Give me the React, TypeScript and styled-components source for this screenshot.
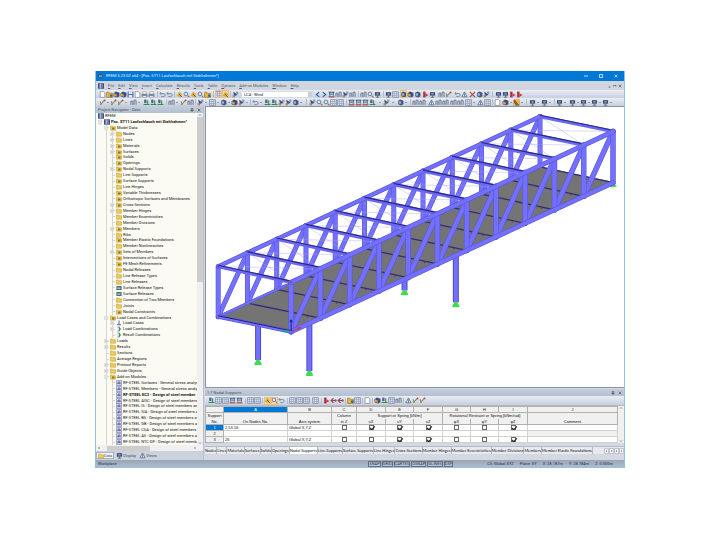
import React from "react";
import styled, { createGlobalStyle, css } from "styled-components";

const GlobalStyle = createGlobalStyle`
  * { box-sizing: border-box; }
  body { margin: 0; background: #fff; font-family: Roboto, "Noto Sans", sans-serif; font-size: 4px; line-height: 6px; color: #111; }
  button, input, select, table { font: inherit; color: inherit; }
  button { padding: 0; border: 0; background: none; }
`;

const Page = styled.div`
  height: 100vh;
  min-height: 400px;
  padding: 71px 95px 72px;
  display: flex;
`;
const Window = styled.div`
  flex: 1;
  min-width: 0;
  display: flex;
  flex-direction: column;
  border: solid #8fc0ea;
  border-width: 0 1px 1px;
  background: #d3d8e1;
`;
const TitleBar = styled.header`
  flex: 0 0 10px;
  display: flex;
  align-items: center;
  gap: 3px;
  padding: 0 2px;
  background: #0078d7;
  color: #e8f3fd;
`;
const Title = styled.h1`
  flex: 1;
  margin: 0;
  font-size: 4px;
  font-weight: 400;
  white-space: nowrap;
`;
const WindowButton = styled.button`
  width: 12px;
  height: 10px;
  display: flex;
  align-items: center;
  justify-content: center;
`;
const MenuBar = styled.nav`
  flex: 0 0 9px;
  display: flex;
  align-items: center;
  gap: 4px;
  padding: 0 2px;
  background: #d1d5df;
  color: #555b68;
`;
const MenuItem = styled.button`
  white-space: nowrap;
`;
const ChildControls = styled.div`
  margin-left: auto;
  display: flex;
  gap: 1px;
`;
const ToolBar = styled.div<{ $height: number }>`
  flex: 0 0 ${(p) => p.$height}px;
  display: flex;
  align-items: center;
  padding-left: 3px;
  overflow: hidden;
  background: linear-gradient(#e9edf4, #d5dbe6 60%, #c7cfdd);
`;
const ToolButton = styled.button<{ $active?: boolean }>`
  flex: 0 0 7px;
  height: 8px;
  display: flex;
  align-items: center;
  justify-content: center;
  ${(p) => p.$active && css`
    background: #fbd9a0;
    outline: 1px solid #e2c086;
    outline-offset: -1px;
  `}
`;
const Drop = styled.i`
  flex: 0 0 4px;
  display: flex;
  justify-content: center;
  &::after { content: ""; border: 1px solid transparent; border-top-color: #555; margin-top: 1px; }
`;
const Split = styled.i<{ $size: number }>`
  flex: 0 0 ${(p) => p.$size}px;
  height: 6px;
  background: ${(p) => (p.$size > 2 ? "linear-gradient(#b4bccb, #b4bccb) center / 1px 100% no-repeat" : "none")};
`;
const LoadSelect = styled.select`
  flex: 0 0 72px;
  height: 7px;
  padding: 0 2px;
  appearance: none;
  border: 1px solid #d5dae3;
  border-radius: 0;
  background: linear-gradient(#c9cfda, #c9cfda) right / 4px 100% no-repeat #fff;
  line-height: 5px;
`;
const Workspace = styled.div`
  flex: 1;
  min-height: 0;
  display: flex;
  gap: 1px;
`;
const Navigator = styled.aside`
  flex: 0 0 108px;
  min-width: 0;
  overflow: hidden;
  display: flex;
  flex-direction: column;
  border-right: 1px solid #b7bfcc;
`;
const PanelTitle = styled.div`
  flex: 0 0 7px;
  display: flex;
  align-items: center;
  justify-content: space-between;
  padding: 0 2px;
  background: linear-gradient(#c4cddb, #b4bfcf);
  color: #4b5361;
`;
const TitleIcons = styled.span`
  display: flex;
  gap: 3px;
`;
const TreeArea = styled.div`
  flex: 1;
  min-height: 0;
  display: flex;
  background: #fbfaf3;
`;
const Tree = styled.ul`
  flex: 1;
  min-width: 0;
  margin: 0;
  padding: 0 0 0 1px;
  overflow: hidden;
  list-style: none;
  display: grid;
  grid-auto-rows: 1fr;
`;
const TreeRow = styled.li<{ $bold?: boolean }>`
  min-height: 0;
  display: flex;
  align-items: center;
  white-space: nowrap;
  font-weight: ${(p) => (p.$bold ? 700 : 400)};
`;
const Guide = styled.span<{ $line: boolean }>`
  flex: 0 0 6px;
  align-self: stretch;
  background: ${(p) => (p.$line ? "linear-gradient(#d6d6d0, #d6d6d0) 3px 0 / 1px 100% no-repeat" : "none")};
`;
const Branch = styled(Guide)`
  display: flex;
  align-items: center;
  background: linear-gradient(#d6d6d0, #d6d6d0) 3px 0 / 1px 100% no-repeat, linear-gradient(#d6d6d0, #d6d6d0) 3px 50% / 3px 1px no-repeat;
`;
const Expander = styled.button`
  width: 4px;
  height: 4px;
  margin-left: 1px;
  display: flex;
`;
const NodeIcon = styled.span`
  flex: 0 0 7px;
  margin-right: 1px;
  display: flex;
  justify-content: center;
`;
const ScrollTrack = styled.div`
  flex: 0 0 6px;
  display: flex;
  flex-direction: column;
  align-items: center;
  background: #f0f0f0;
`;
const Thumb = styled.div<{ $grow: number }>`
  flex: ${(p) => p.$grow} 1 0;
  width: 100%;
  background: #cdcdcd;
`;
const Space = styled.div<{ $grow: number }>`
  flex: ${(p) => p.$grow} 1 0;
`;
const HScroll = styled.div`
  flex: 0 0 6px;
  display: flex;
  align-items: center;
  padding: 0 6px 0 1px;
  background: #f0f0f0;
`;
const HThumb = styled.div`
  flex: 0 0 43%;
  height: 5px;
  margin: 0 auto 0 6px;
  background: #cdcdcd;
`;
const NavTabs = styled.div`
  flex: 0 0 9px;
  display: flex;
  align-items: center;
  gap: 1px;
  background: #cbd2de;
  color: #475062;
`;
const NavTab = styled.button<{ $active?: boolean }>`
  height: 7px;
  padding: 0 1px;
  display: flex;
  align-items: center;
  background: ${(p) => (p.$active ? "#f4f6fa" : "transparent")};
  border: ${(p) => (p.$active ? "1px solid #a9b2c2" : "0")};
`;
const Content = styled.main`
  flex: 1;
  min-width: 0;
  display: flex;
  flex-direction: column;
`;
const Viewport = styled.div`
  flex: 1;
  min-height: 0;
  display: flex;
  border: solid #8a93a0;
  border-width: 1px 0 1px 1px;
  background: #fff;
  svg { width: 100%; height: 100%; display: block; }
`;
const TablePanel = styled.section`
  flex: 0 0 71px;
  margin-top: 1px;
  display: flex;
  flex-direction: column;
`;
const Grid = styled.div`
  display: flex;
  border-top: 1px solid #b4b9c2;
  background: #fff;
`;
const SheetTable = styled.table`
  flex: 1;
  min-width: 0;
  table-layout: fixed;
  border-collapse: collapse;
  background: #fff;
  font-family: "Liberation Sans", Arial, sans-serif;
  line-height: 5px;
`;
const HeadCell = styled.th<{ $active?: boolean; $top?: boolean; $bottom?: boolean }>`
  height: 6px;
  padding: 0;
  overflow: hidden;
  white-space: nowrap;
  font-weight: 400;
  text-align: center;
  background: ${(p) => (p.$active ? "#0078d7" : "#f0f0f0")};
  color: ${(p) => (p.$active ? "#fff" : "inherit")};
  border: 1px solid #b0b0b0;
  ${(p) => p.$top && "border-bottom: 0;"}
  ${(p) => p.$bottom && "border-top: 0;"}
`;
const Cell = styled.td<{ $center?: boolean; $focus?: boolean; $muted?: boolean }>`
  height: 6px;
  padding: 0 1px;
  overflow: hidden;
  white-space: nowrap;
  text-align: ${(p) => (p.$center ? "center" : "left")};
  background: ${(p) => (p.$muted ? "#f0f0f0" : "#fff")};
  border: 1px solid #d0d0d0;
  ${(p) => p.$focus && "border: 1px dashed #777;"}
`;
const Check = styled.input`
  appearance: none;
  width: 5px;
  height: 5px;
  margin: 0 auto;
  display: block;
  border: 1px solid #666;
  background: #fff;
  &:checked::before {
    content: "";
    display: block;
    width: 4px;
    height: 2px;
    border: solid #222;
    border-width: 0 0 1px 1px;
    transform: rotate(-45deg);
  }
`;
const SheetTabs = styled.div`
  flex: 0 0 8px;
  margin-top: 3px;
  display: flex;
  align-items: center;
  overflow: hidden;
  background: #e7e9ee;
  border-top: 1px solid #b6bac2;
  font-family: Lato, sans-serif;
`;
const SheetTab = styled.button<{ $active?: boolean }>`
  height: 7px;
  flex: none;
  white-space: nowrap;
  border-right: 1px solid #b4b8c0;
  background: ${(p) => (p.$active ? "#fff" : "transparent")};
`;
const TabArrows = styled.div`
  margin-left: auto;
  flex: none;
  display: flex;
`;
const ArrowButton = styled.button`
  width: 5px;
  height: 6px;
  border: 1px solid #c0c5ce;
  background: #f0f2f5;
  display: flex;
  align-items: center;
  justify-content: center;
`;
const StatusBar = styled.footer`
  flex: 0 0 7px;
  display: flex;
  align-items: center;
  padding: 0 2px;
  background: linear-gradient(#98a5b7, #b0bccb);
  color: #29303b;
  white-space: nowrap;
`;
const StatusLabel = styled.span`
  flex: 1 1 0;
`;
const StatusToggle = styled.button`
  height: 6px;
  margin-right: 1px;
  line-height: 4px;
  border: 1px solid #667182;
  background: #bbc4d1;
`;
const Coordinates = styled.span`
  margin-left: 33px;
  padding-right: 9px;
  display: flex;
  gap: 6px;
`;

const glyphs = {
  page: <path d="M1 .5h3l1 1v4H1z" fill="#fff" stroke="#7b8593" strokeWidth=".6" />,
  open: <><path d="M.5 1h2l.5 1h2.500v3.500h-5z" fill="#e6b437" stroke="#957327" strokeWidth=".5" /><path d="M3.500 3h2v2h-2z" fill="#3d5d9c" /></>,
  box: <><path d="M.5 2l2-1.500 3 1v3l-2 1-3-1z" fill="#3c4c80" /><path d="M.8 2l2.500 1v2L.8 4z" fill="#df9c36" /></>,
  save: <><path d="M.5.500h5v5h-5z" fill="#5670b4" /><path d="M1.500.500h3v2h-3zM1.500 3.500h3v2h-3z" fill="#e5ebf6" /></>,
  print: <><path d="M.5 2.500h5v2.500h-5z" fill="#7d8899" /><path d="M1.500.500h3v2h-3zM1.500 4h3v1.500h-3z" fill="#fff" stroke="#697382" strokeWidth=".4" /></>,
  find: <><circle cx="2.500" cy="2.500" r="1.600" fill="#d8e5f5" stroke="#5d6b88" strokeWidth=".7" /><path d="M4 4l1.500 1.500" stroke="#ae6b32" strokeWidth=".9" /></>,
  undo: <path d="M1.500 1L.7 2.300l1.500.7M1 2.200h3.200q1.300.2 1 1.600-.3 1-1.600 1H2" fill="none" stroke="#74839e" strokeWidth=".8" />,
  gold: <><path d="M.6 4l2-3.500 2.700 2-1.500 3z" fill="#deb03a" /><path d="M2.500 2.500l2.600 2.700" stroke="#785224" strokeWidth=".8" /></>,
  red: <><path d="M1 .5h2v5H1z" fill="#a93240" /><path d="M3 2l2.500 1.500L3 5z" fill="#d93434" /></>,
  back: <><path d="M5.500 3h-4M3 1L1 3l2 2" stroke="#ad3a45" fill="none" /><path d="M4 2h1.500v2H4z" fill="#59698c" /></>,
  grid: <><path d="M.5.500h5v5h-5z" fill="#dfe6f1" stroke="#7383a5" strokeWidth=".6" /><path d="M.5 2.200h5M.5 3.900h5M2.200.500v5M3.900.500v5" stroke="#8f9bb4" strokeWidth=".5" /></>,
  left: <path d="M4.500 1L2 3l2.500 2" stroke="#3059a6" fill="none" />,
  right: <path d="M1.500 1L4 3 1.500 5" stroke="#3059a6" fill="none" />,
  load: <><path d="M.5 1h5M1.500 1v3M4.500 1v3" stroke="#384f83" strokeWidth=".8" /><path d="M.5 5h5" stroke="#a54142" /><path d="M2 2h2v1.500H2z" fill="#6f9f79" /></>,
  cursor: <><path d="M1 .5l4 3-2 .3-1 1.700z" fill="#3a5285" /><path d="M3.500.500h2v2h-2z" fill="#8c99b4" /><path d="M.5 3.500h1.800v2H.5z" fill="#b98d53" /></>,
  solid: <><path d="M1 1.500L3 .5l2.500 1v3l-2 1L1 4.500z" fill="#46557c" /><path d="M1.500 2h2v2h-2z" fill="#9bb6dc" /></>,
  green: <><path d="M1 .5h2v3H1z" fill="#526289" /><path d="M.5 4.700h5M4 1v4" stroke="#2b9145" strokeWidth=".9" /></>,
  cross: <path d="M.8.800l4.400 4.400M5.200.800L.8 5.200" stroke="#b44b45" />,
  pencil: <><path d="M1 5l3.800-4M1 2l1 3" stroke="#898b53" strokeWidth=".9" /><circle cx="4.800" cy="1.200" r=".8" fill="#b5434a" /></>,
  view: <><path d="M.8 1h4.400v3H.8z" fill="#3e4c72" /><path d="M2 2h2v1H2z" fill="#95b5de" /><path d="M3 4v1.500M1.500 5.300h3" stroke="#5b6477" strokeWidth=".7" /></>,
  pair: <><path d="M.8 5V1.800h1.600V5M3.500 5V1h1.700v4" fill="none" stroke="#66738c" strokeWidth=".8" /></>,
  tri: <path d="M3 .8L.8 5h4.400zM3 2v3" fill="#edf1f6" stroke="#59698c" strokeWidth=".7" />,
  color: <><path d="M.5.500h5v5h-5z" fill="#ca3e36" /><path d="M.5 3l2.500 2.500H.5zM5.500.500v5l-4-5z" fill="#ebc433" /><path d="M2 2l3.500 3.500H2z" fill="#358c4b" /></>,
};
type Kind = keyof typeof glyphs;
const codes: Record<string, Kind> = {
  a: "page", b: "open", c: "box", d: "save", e: "print", f: "find", g: "undo", h: "gold", i: "red", j: "grid", k: "back",
  l: "left", r: "right", m: "load", n: "cursor", s: "solid", t: "green", x: "cross", p: "pencil", v: "view",
  q: "pair", w: "tri", y: "color",
};
const Icon = ({ kind }: { kind: Kind }) => (
  <svg width="7" height="7" viewBox="0 0 6 6" aria-hidden="true">{glyphs[kind]}</svg>
);

/* Letters are tools, "*" marks the next one active, "." is a drop arrow, digits are gaps of that width. */
const Tools = ({ layout }: { layout: string }) => {
  const parts: React.ReactNode[] = [];
  let active = false;
  [...layout].forEach((ch, index) => {
    if (ch === "*") active = true;
    else if (ch === ".") parts.push(<Drop key={index} />);
    else if (/\d/.test(ch)) parts.push(<Split key={index} $size={Number(ch)} />);
    else {
      parts.push(
        <ToolButton key={index} type="button" $active={active} aria-label={codes[ch]}>
          <Icon kind={codes[ch]} />
        </ToolButton>
      );
      active = false;
    }
  });
  return <>{parts}</>;
};

const Arrow = ({ d, color = "#555" }: { d: string; color?: string }) => (
  <svg width="4" height="4" viewBox="0 0 4 4" aria-hidden="true">
    <path d={d} fill="none" stroke={color} strokeWidth=".7" />
  </svg>
);
const UP = "M1 2.500l1-1 1 1";
const DOWN = "M1 1.500l1 1 1-1";
const LEFT = "M2.500 1l-1 1 1 1";
const RIGHT = "M1.500 1l1 1-1 1";
const CROSS = "M.7.700l2.600 2.600M3.300.700L.7 3.300";
const PIN = "M1.300.500h1.500v2H1.300zM.5 2.500h3M2 2.500v1.500";

type TreeIcon = "app" | "folder" | "mark" | "surface" | "load" | "combo" | "module";
const TreeGlyph = ({ kind }: { kind: TreeIcon }) => (
  <svg width="6" height="6" viewBox="0 0 6 6" aria-hidden="true">
    {kind === "app" && <><path d="M0 .3h6v5.400H0z" fill="#3d5285" /><path d="M1 2h4M1 4h4M2.500.500v5" stroke="#dce5f5" strokeWidth=".6" /></>}
    {(kind === "folder" || kind === "mark") && <path d="M.4 1h2l.6.800h2.600v3.400H.4z" fill="#f0cd55" stroke="#b99434" strokeWidth=".5" />}
    {kind === "mark" && <path d="M2 2.500h2.500v2H2z" fill="#8d7726" />}
    {kind === "surface" && <><path d="M.4 1h5.200v4H.4z" fill="#4d6d89" /><path d="M1.200 2.500h3.600L4 4H1.500z" fill="#a6ce91" /></>}
    {kind === "load" && <path d="M3 .5v4M1 4.700h4" stroke="#385a9d" strokeWidth=".9" />}
    {kind === "combo" && <><path d="M1.500 1h2v4h-2" fill="#d8e2f1" stroke="#4f6394" strokeWidth=".7" /><path d="M3 1.500L5.500 3 3 4.500z" fill="#329545" /></>}
    {kind === "module" && <><path d="M.5.500h5v5h-5z" fill="#dfe2f6" stroke="#7075af" strokeWidth=".6" /><path d="M2 4.500V2h2v2.500M1.500 3.300h3" fill="none" stroke="#34396e" strokeWidth=".6" /></>}
  </svg>
);

type Row = [level: number, label: string, icon: TreeIcon, mark?: "+" | "-", bold?: boolean];
const rows: Row[] = [
  [0, "RFEM", "app"],
  [1, "Pos. ST11 Laufschlauch mit Stahlrahmen*", "app", "-", true],
  [2, "Model Data", "mark", "-"],
  [3, "Nodes", "folder", "+"], [3, "Lines", "folder", "+"], [3, "Materials", "mark", "+"], [3, "Surfaces", "mark", "+"],
  [3, "Solids", "mark"], [3, "Openings", "mark"], [3, "Nodal Supports", "mark", "+"], [3, "Line Supports", "folder"],
  [3, "Surface Supports", "mark"], [3, "Line Hinges", "folder"], [3, "Variable Thicknesses", "mark"],
  [3, "Orthotropic Surfaces and Membranes", "mark"], [3, "Cross-Sections", "mark", "+"], [3, "Member Hinges", "folder", "+"],
  [3, "Member Eccentricities", "folder"], [3, "Member Divisions", "folder"], [3, "Members", "mark", "+"], [3, "Ribs", "folder"],
  [3, "Member Elastic Foundations", "mark"], [3, "Member Nonlinearities", "folder"], [3, "Sets of Members", "mark", "+"],
  [3, "Intersections of Surfaces", "mark"], [3, "FE Mesh Refinements", "mark"], [3, "Nodal Releases", "folder"],
  [3, "Line Release Types", "folder"], [3, "Line Releases", "folder"], [3, "Surface Release Types", "surface"],
  [3, "Surface Releases", "surface"], [3, "Connection of Two Members", "folder"], [3, "Joints", "folder"],
  [3, "Nodal Constraints", "mark"],
  [2, "Load Cases and Combinations", "mark", "-"],
  [3, "Load Cases", "load", "+"], [3, "Load Combinations", "combo", "+"], [3, "Result Combinations", "combo"],
  [2, "Loads", "folder", "+"], [2, "Results", "folder", "+"], [2, "Sections", "folder"], [2, "Average Regions", "folder"],
  [2, "Printout Reports", "folder", "+"], [2, "Guide Objects", "folder", "+"], [2, "Add-on Modules", "mark", "-"],
  [3, "RF-STEEL Surfaces - General stress analys", "module"], [3, "RF-STEEL Members - General stress analy", "module"],
  [3, "RF-STEEL EC3 - Design of steel member", "module", undefined, true],
  [3, "RF-STEEL AISC - Design of steel members", "module"], [3, "RF-STEEL IS - Design of steel members ac", "module"],
  [3, "RF-STEEL SIA - Design of steel members a", "module"], [3, "RF-STEEL BS - Design of steel members a", "module"],
  [3, "RF-STEEL GB - Design of steel members a", "module"], [3, "RF-STEEL CSA - Design of steel members", "module"],
  [3, "RF-STEEL AS - Design of steel members a", "module"], [3, "RF-STEEL NTC-DF - Design of steel memb", "module"],
];

/* Bridge geometry: eleven panels, far and near truss planes. */
const PANELS = 11;
const nodes = Array.from({ length: PANELS + 1 }, (_, i) => i / PANELS);
const farTop = (t: number) => [217.5 + 323 * t, 267 - 150.5 * t];
const farLow = (t: number) => [217.5 + 323 * t, 317.5 - 150.5 * t];
const nearTop = (t: number) => [290.7 + 323 * t, 283 - 151.5 * t];
const nearLow = (t: number) => [290.7 + 323 * t, 332.5 - 149.5 * t];
const seg = (a: number[], b: number[]) => `M${a[0]} ${a[1]}L${b[0]} ${b[1]}`;

const Beam = ({ d, w }: { d: string; w: number }) => (
  <>
    <path d={d} stroke="#5956de" strokeWidth={w} strokeLinecap="round" fill="none" />
    <path d={d} stroke="#7270fc" strokeWidth={w - 1.2} strokeLinecap="round" fill="none" />
  </>
);
const CrossBeam = ({ a, b }: { a: number[]; b: number[] }) => (
  <>
    <path d={seg(a, b)} stroke="#6967f4" strokeWidth="3.500" />
    <path d={seg([a[0], a[1] - 1.2], [b[0], b[1] - 1.2])} stroke="#2b2880" strokeWidth="1.200" />
  </>
);
const Column = ({ x, top, foot }: { x: number; top: number; foot: number }) => (
  <>
    <path d={`M${x} ${top}V${foot}`} stroke="#4b48cb" strokeWidth="6" />
    <path d={`M${x} ${top}V${foot}`} stroke="#7270fc" strokeWidth="4" />
    <path d={`M${x - 1.5} ${foot}h3l2 3.500q1 1.500-1 1.500h-5q-2 0-1-1.500z`} fill="#3fdc4c" />
  </>
);

const Bridge = () => (
  <svg viewBox="206 107 418 281" role="img" aria-label="Bridge model">
    <Column x={404.5} top={275} foot={291} />
    {nodes.slice(0, -1).map((t) => (
      <Beam key={t} d={seg(farLow(t), farTop(t + 1 / PANELS))} w={5} />
    ))}
    {nodes.map((t) => <Beam key={t} d={seg(farLow(t), farTop(t))} w={5} />)}
    <path d="M217.500 316.500L540 166.500 613.700 182 291 331.500z" fill="#747474" />
    {nodes.slice(1).map((t) => (
      <path key={t} d={seg(farLow(t), nearLow(t))} stroke="#302e7c" strokeWidth="1.300" />
    ))}
    {nodes.slice(1, -1).map((t) => {
      const [x, y] = nearLow(t);
      return <circle key={t} cx={x - 13} cy={y - 1.5} r=".7" fill="#6e2d60" />;
    })}
    <Beam d={seg(farLow(0), farLow(0.21))} w={3} />
    {nodes.slice(0, -1).map((t) => {
      const n = t + 1 / PANELS;
      return <path key={t} d={seg(farTop(n), nearTop(t)) + seg(farTop(t), nearTop(n))} stroke="#a3a2e4" strokeWidth=".4" />;
    })}
    <Beam d={seg(farTop(0), farTop(1))} w={4.5} />
    {nodes.map((t) => <CrossBeam key={t} a={farTop(t)} b={nearTop(t)} />)}
    <Column x={257.5} top={325} foot={361} />
    <Column x={309} top={324} foot={372} />
    <Column x={456} top={255} foot={303} />
    <path d="M609 187l5-3 4 2.500q-3 2-9 .5z" fill="#3fdc4c" />
    {nodes.slice(0, -1).map((t) => (
      <Beam key={t} d={seg(nearLow(t), nearTop(t + 1 / PANELS))} w={5.5} />
    ))}
    {nodes.map((t) => <Beam key={t} d={seg(nearLow(t), nearTop(t))} w={5.5} />)}
    <Beam d={seg(nearTop(0), nearTop(1))} w={5} />
    <Beam d={seg(nearLow(0), nearLow(1))} w={5} />
    <Beam d={seg(farLow(0), nearLow(0))} w={4} />
    <path d="M217.500 316.500L290 331.500" stroke="#23206f" strokeWidth="1" />
    <path d="M290.700 332v-11m-1.200 2l1.200-2.500 1.200 2.500" stroke="#171795" strokeWidth="1" fill="none" />
    <path d="M281 331.500l9 1" stroke="#2c9d99" strokeWidth="2" />
    <path d="M292 332l8-3.500m-3 0l3 0-2 2" stroke="#d72c52" strokeWidth="1" fill="none" />
    <circle cx="290.700" cy="283" r=".8" fill="#7d2950" />
    <circle cx="217.500" cy="267.500" r=".8" fill="#7d2950" />
  </svg>
);

const letters = "ABCDEFGHIJ".split("");
const widths = [18, 64, 44, 25, 29, 28, 29, 28, 28, 29];
const units = ["uX", "uY", "uZ", "φX", "φY", "φZ"];
const data = [
  { no: 1, nodes: "2,53-56", axis: "Global X,Y,Z", checks: [0, 1, 1, 1, 0, 0, 1] },
  { no: 2, nodes: "", axis: "", checks: [] },
  { no: 3, nodes: "26", axis: "Global X,Y,Z", checks: [0, 0, 1, 1, 0, 0, 1] },
];
const sheets = ["Nodes", "Lines", "Materials", "Surfaces", "Solids", "Openings", "Nodal Supports", "Line Supports", "Surface Supports",
  "Line Hinges", "Cross-Sections", "Member Hinges", "Member Eccentricities", "Member Divisions", "Members", "Member Elastic Foundations"];

const Sheet = () => (
  <SheetTable>
    <colgroup>
      {widths.map((w, i) => <col key={i} width={w} />)}
      <col />
    </colgroup>
    <thead>
      <tr>
        <HeadCell />
        {letters.map((l) => <HeadCell key={l} $active={l === "A"}>{l}</HeadCell>)}
      </tr>
      <tr>
        <HeadCell $top>Support</HeadCell>
        <HeadCell $top /><HeadCell $top />
        <HeadCell $top>Column</HeadCell>
        <HeadCell $top colSpan={3}>Support or Spring [kN/m]</HeadCell>
        <HeadCell $top colSpan={3}>Rotational Restraint or Spring [kNm/rad]</HeadCell>
        <HeadCell $top />
      </tr>
      <tr>
        <HeadCell $bottom>No.</HeadCell>
        <HeadCell $bottom>On Nodes No.</HeadCell>
        <HeadCell $bottom>Axis system</HeadCell>
        <HeadCell $bottom>in Z</HeadCell>
        {units.map((u) => <HeadCell key={u} $bottom>{u}</HeadCell>)}
        <HeadCell $bottom>Comment</HeadCell>
      </tr>
    </thead>
    <tbody>
      {data.map((row) => (
        <tr key={row.no}>
          <HeadCell scope="row" $active={row.no === 1}>{row.no}</HeadCell>
          <Cell $focus={row.no === 1}>{row.nodes}</Cell>
          <Cell>{row.axis}</Cell>
          {Array.from({ length: 7 }, (_, i) => (
            <Cell key={i} $center>
              {row.checks.length > 0 && (
                <Check type="checkbox" defaultChecked={row.checks[i] === 1} aria-label={`Row ${row.no}, ${["in Z", ...units][i]}`} />
              )}
            </Cell>
          ))}
          <Cell $muted={row.no === 2} />
        </tr>
      ))}
    </tbody>
  </SheetTable>
);

export default function App() {
  return (
    <Page>
      <GlobalStyle />
      <Window>
        <TitleBar>
          <svg width="5" height="6" viewBox="0 0 5 6" aria-hidden="true">
            <circle cx="2.500" cy="3" r="2.300" fill="#2b527f" /><path d="M1 4l3-2M1 2.500l3 1.500" stroke="#d6c28c" strokeWidth=".7" />
          </svg>
          <Title>RFEM 5.23.02 x64 - [Pos. ST11 Laufschlauch mit Stahlrahmen*]</Title>
          <WindowButton aria-label="Minimize"><Arrow d="M0 2h4" color="#fff" /></WindowButton>
          <WindowButton aria-label="Maximize"><Arrow d="M.5.500h3v3h-3z" color="#fff" /></WindowButton>
          <WindowButton aria-label="Close"><Arrow d={CROSS} color="#fff" /></WindowButton>
        </TitleBar>
        <MenuBar>
          <TreeGlyph kind="app" />
          {["File", "Edit", "View", "Insert", "Calculate", "Results", "Tools", "Table", "Options", "Add-on Modules", "Window", "Help"].map((m) => (
            <MenuItem key={m} type="button"><u>{m[0]}</u>{m.slice(1)}</MenuItem>
          ))}
          <ChildControls><Arrow d="M.5 3h2" /><Arrow d="M.5 2.500v-1h2.500v1" /><Arrow d={CROSS} /></ChildControls>
        </MenuBar>
        <ToolBar $height={8}>
          <Tools layout="abccdaee4gg3hfhfb4*j*h3n2" />
          <LoadSelect aria-label="Load case" defaultValue="LC4">
            <option value="LC4">LC4 - Wind</option>
          </LoadSelect>
          <Tools layout="1lrmqnq4qfv4vj1*scs1iv2qp2gw1xsn5vvii" />
        </ToolBar>
        <ToolBar $height={8}>
          <Tools layout="p.pp.2q.2ttt4q.1pq3n.1j.s.cn.3g.1ttnns.6nffjj4mmmt2.1n1.2s.4qq2wqq1qq1j.1wj3a1c.y.5v.1v.4v.2v.v.v.v." />
        </ToolBar>
        <Workspace>
          <Navigator>
            <PanelTitle>
              Project Navigator - Data
              <TitleIcons><Arrow d={PIN} /><Arrow d={CROSS} /></TitleIcons>
            </PanelTitle>
            <TreeArea>
              <Tree>
                {rows.map(([level, label, icon, mark, bold], i) => (
                  <TreeRow key={i} $bold={bold}>
                    {Array.from({ length: Math.max(0, level - 1) }, (_, g) => (
                      <Guide key={g} $line={g === 1} />
                    ))}
                    {level > 0 && (
                      <Branch $line>
                        {mark && (
                          <Expander type="button" aria-label={`Toggle ${label}`}>
                            <svg width="4" height="4" viewBox="0 0 4 4">
                              <path d="M.3.300h3.400v3.400H.3z" fill="#fff" stroke="#bbb" strokeWidth=".5" />
                              <path d={mark === "+" ? "M1 2h2M2 1v2" : "M1 2h2"} stroke="#889" strokeWidth=".5" />
                            </svg>
                          </Expander>
                        )}
                      </Branch>
                    )}
                    <NodeIcon><TreeGlyph kind={icon} /></NodeIcon>
                    {label}
                  </TreeRow>
                ))}
              </Tree>
              <ScrollTrack>
                <Arrow d={UP} />
                <Thumb $grow={51} />
                <Space $grow={49} />
                <Arrow d={DOWN} />
              </ScrollTrack>
            </TreeArea>
            <HScroll><Arrow d={LEFT} /><HThumb /><Arrow d={RIGHT} /></HScroll>
            <NavTabs>
              <NavTab type="button" $active><TreeGlyph kind="folder" />Data</NavTab>
              <NavTab type="button"><Icon kind="view" />Display</NavTab>
              <NavTab type="button"><Icon kind="tri" />Views</NavTab>
            </NavTabs>
          </Navigator>
          <Content>
            <Viewport><Bridge /></Viewport>
            <TablePanel>
              <PanelTitle>
                1.7 Nodal Supports
                <TitleIcons><Arrow d={PIN} /><Arrow d={CROSS} /></TitleIcons>
              </PanelTitle>
              <ToolBar $height={9}>
                <Tools layout="tjjmm4jj3*h*fg4jjj2j4ikk3bj3a3ctjq3wpp" />
              </ToolBar>
              <Grid>
                <Sheet />
                <ScrollTrack>
                  <Arrow d={UP} /><Space $grow={1} /><Arrow d={DOWN} />
                </ScrollTrack>
              </Grid>
              <SheetTabs>
                {sheets.map((s) => <SheetTab key={s} type="button" $active={s === "Nodal Supports"}>{s}</SheetTab>)}
                <TabArrows>
                  {[LEFT, LEFT, RIGHT, RIGHT].map((d, i) => (
                    <ArrowButton key={i} type="button" aria-label={i < 2 ? "Previous" : "Next"}><Arrow d={d} color="#111" /></ArrowButton>
                  ))}
                </TabArrows>
              </SheetTabs>
            </TablePanel>
          </Content>
        </Workspace>
        <StatusBar>
          <StatusLabel>Workplane</StatusLabel>
          {["SNAP", "GRID", "CARTES", "OSNAP", "GLINES", "DXF"].map((s) => <StatusToggle key={s} type="button">{s}</StatusToggle>)}
          <Coordinates>
            <span>CS: Global XYZ</span><span>Plane: XY</span><span>X: 28.187m</span><span>Y: 28.784m</span><span>Z: 0.000m</span>
          </Coordinates>
        </StatusBar>
      </Window>
    </Page>
  );
}
